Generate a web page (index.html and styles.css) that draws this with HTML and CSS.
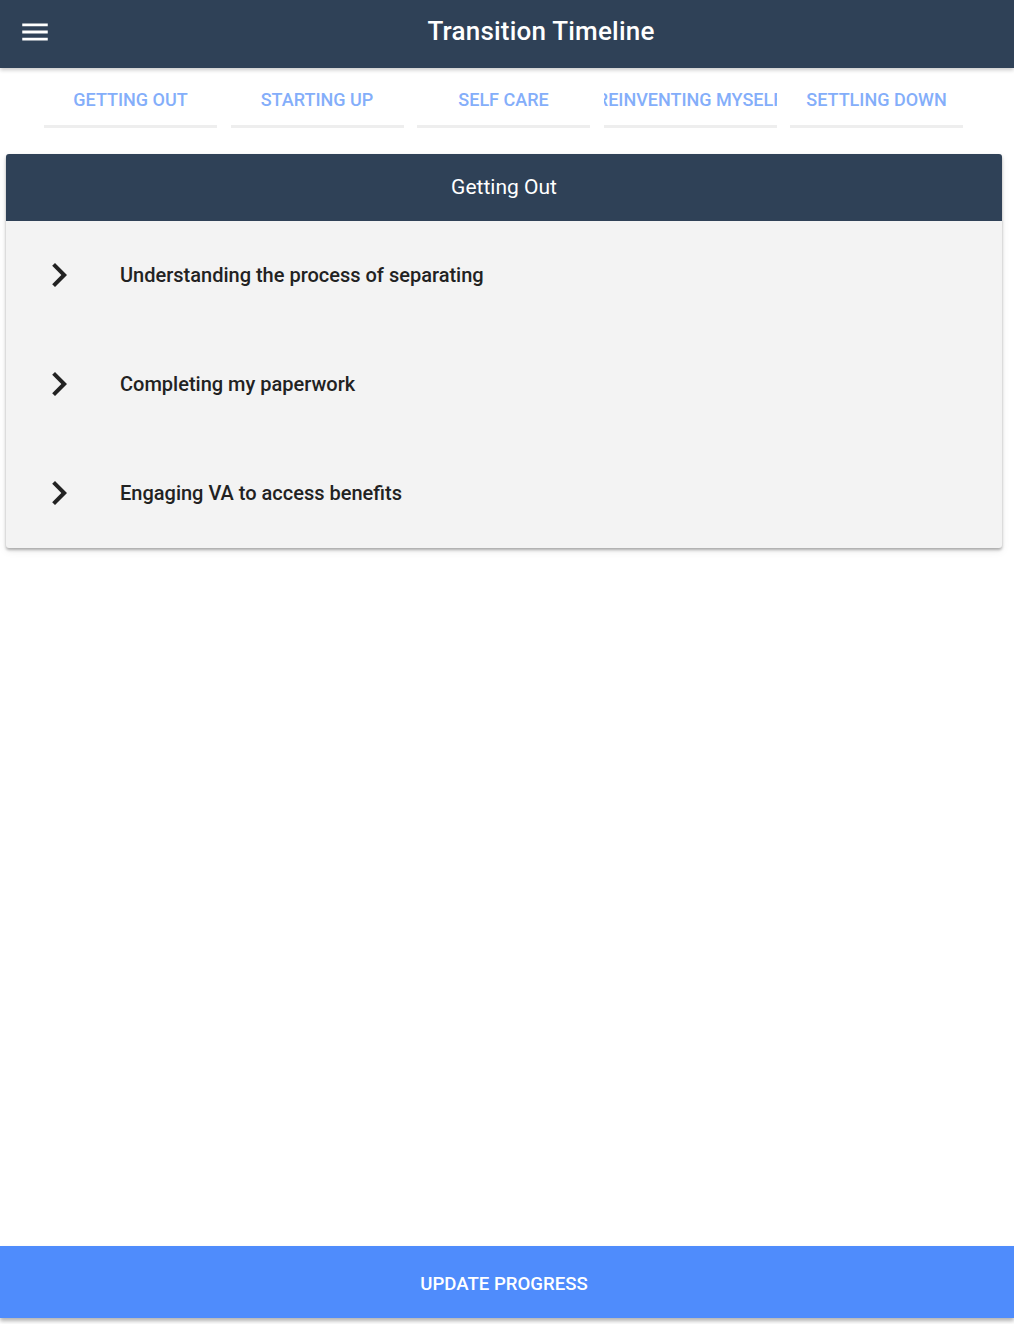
FILE: index.html
```html
<!DOCTYPE html>
<html>
<head>
<meta charset="utf-8">
<link rel="stylesheet" href="styles.css">
</head>
<body>
<div class="app">
  <header class="toolbar">
    <button class="menu-btn" aria-label="menu">
      <svg width="24" height="24" viewBox="0 0 24 24"><path d="M3 18h18v-2H3v2zm0-5h18v-2H3v2zm0-7v2h18V6H3z" fill="#fff"/></svg>
    </button>
    <h1 class="title">Transition Timeline</h1>
  </header>
  <nav class="tabs">
    <div class="tab"><span>GETTING OUT</span></div>
    <div class="tab"><span>STARTING UP</span></div>
    <div class="tab"><span>SELF CARE</span></div>
    <div class="tab"><span>REINVENTING MYSELF</span></div>
    <div class="tab"><span>SETTLING DOWN</span></div>
  </nav>
  <section class="card">
    <div class="card-head">Getting Out</div>
    <ul class="items">
      <li class="item">
        <svg class="chev" width="48" height="48" viewBox="0 0 24 24"><path d="M10 6L8.59 7.41 13.17 12l-4.58 4.59L10 18l6-6z" fill="#222"/></svg>
        <span>Understanding the process of separating</span>
      </li>
      <li class="item">
        <svg class="chev" width="48" height="48" viewBox="0 0 24 24"><path d="M10 6L8.59 7.41 13.17 12l-4.58 4.59L10 18l6-6z" fill="#222"/></svg>
        <span>Completing my paperwork</span>
      </li>
      <li class="item">
        <svg class="chev" width="48" height="48" viewBox="0 0 24 24"><path d="M10 6L8.59 7.41 13.17 12l-4.58 4.59L10 18l6-6z" fill="#222"/></svg>
        <span>Engaging VA to access benefits</span>
      </li>
    </ul>
  </section>
  <div class="spacer"></div>
  <button class="update">UPDATE PROGRESS</button>
</div>
</body>
</html>
```
FILE: styles.css
```css
html, body {
  margin: 0;
  padding: 0;
  background: #fff;
  font-family: Roboto, "Noto Sans", Arial, sans-serif;
}
.app {
  height: 1324px;
  display: flex;
  flex-direction: column;
}
.toolbar {
  height: 68px;
  background: #2f4157;
  display: flex;
  align-items: center;
  box-shadow: 0 2px 4px rgba(0,0,0,0.22);
  position: relative;
  z-index: 2;
  flex: none;
}
.menu-btn {
  width: 68px;
  height: 68px;
  padding: 0;
  border: 0;
  background: transparent;
  display: flex;
  align-items: center;
  justify-content: center;
  flex: none;
}
.menu-btn svg {
  width: 34px;
  height: 34px;
  margin-left: 2px;
  margin-top: -4px;
}
.title {
  flex: 1;
  margin: 0 0 7px;
  text-align: center;
  color: #fff;
  font-size: 26px;
  font-weight: 500;
  letter-spacing: 0.2px;
}
.tabs {
  display: flex;
  gap: 13.5px;
  padding: 0 44px;
  height: 60px;
  flex: none;
}
.tab {
  width: 173px;
  flex: none;
  border-bottom: 3px solid #eeeeee;
  display: flex;
  justify-content: center;
  align-items: center;
  overflow: hidden;
  padding-top: 6px;
  box-sizing: border-box;
}
.tab span {
  white-space: nowrap;
  flex: none;
  color: #84aefa;
  font-size: 18px;
  font-weight: 500;
}
.card {
  margin: 26px 12px 0 6px;
  background: #f3f3f3;
  border-radius: 3px;
  box-shadow: 0 2px 3px rgba(0,0,0,0.3), 0 3px 8px rgba(0,0,0,0.08);
  overflow: hidden;
  flex: none;
}
.card-head {
  height: 67px;
  background: #2f4157;
  color: #fff;
  font-size: 21px;
  display: flex;
  align-items: center;
  justify-content: center;
  padding-bottom: 2px;
  box-sizing: border-box;
}
.items {
  list-style: none;
  margin: 0;
  padding: 0 0 1px;
}
.item {
  height: 109px;
  display: flex;
  align-items: center;
  color: #222;
  font-size: 20px;
  font-weight: 500;
}
.item:first-child {
  height: 108px;
}
.chev {
  margin-left: 29px;
  margin-right: 37px;
  flex: none;
}
.spacer {
  flex: 1;
}
.update {
  height: 72px;
  margin-bottom: 6px;
  border: 0;
  padding: 3px 6px 0 0;
  background: #4f8cfc;
  color: #fff;
  font-family: Roboto, Arial, sans-serif;
  font-size: 18.6px;
  font-weight: 500;
  box-shadow: 0 3px 4px rgba(0,0,0,0.3);
  flex: none;
}
```
